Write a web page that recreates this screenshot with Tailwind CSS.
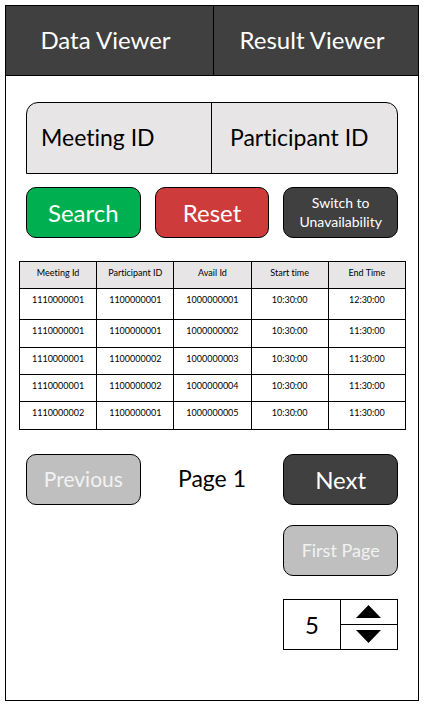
<!DOCTYPE html>
<html lang="en">
<head>
<meta charset="utf-8">
<meta name="viewport" content="width=device-width, initial-scale=1">
<title>Data Viewer</title>
<script src="https://cdn.jsdelivr.net/npm/@tailwindcss/browser@4"></script>
</head>
<body class="bg-white font-['Lato','Open_Sans',sans-serif] text-black [font-variant-ligatures:none]">
<div class="flex min-h-screen px-[5px] pt-[5px] pb-2">
  <div class="flex w-full flex-col border border-black">
    <nav class="grid h-[70px] grid-cols-[104fr_102fr] border-b border-black bg-[#404040] text-2xl text-white">
      <a href="#data" class="flex items-center justify-center border-r border-black pr-2 pb-0.5">Data Viewer</a>
      <a href="#result" class="flex items-center justify-center pr-2 pb-0.5">Result Viewer</a>
    </nav>
    <main class="flex flex-col pt-[26px]">
      <form class="px-5">
        <div class="grid h-[72px] grid-cols-2 overflow-hidden rounded-t-xl border border-black bg-[#e7e5e6] text-[23px]">
          <input type="text" aria-label="Meeting ID" placeholder="Meeting ID" class="min-w-0 border-r border-black pb-0.5 pl-3.5 placeholder:text-black">
          <input type="text" aria-label="Participant ID" placeholder="Participant ID" class="min-w-0 pb-0.5 pl-[18px] placeholder:text-black">
        </div>
        <div class="mt-[13px] grid h-[51px] grid-cols-3 gap-3.5 text-white">
          <button type="button" class="rounded-[10px] border border-black bg-[#00b050] text-2xl">Search</button>
          <button type="reset" class="rounded-[10px] border border-black bg-[#cd3b3b] text-2xl">Reset</button>
          <button type="button" class="rounded-[10px] border border-black bg-[#404040] pb-0.5 text-sm leading-[19px]">Switch to Unavailability</button>
        </div>
      </form>
      <div class="mt-[23px] px-[13px] pr-3">
        <table class="w-full table-fixed border-collapse text-center text-[9px] leading-[10px] [&_td]:border [&_td]:border-black [&_td]:pt-1.5 [&_td]:align-top [&_th]:border [&_th]:border-black [&_th]:pt-1.5 [&_th]:align-top [&_th]:font-normal">
          <thead>
            <tr class="h-[27px] bg-[#e7e5e6]"><th>Meeting Id</th><th>Participant ID</th><th>Avail Id</th><th>Start time</th><th>End Time</th></tr>
          </thead>
          <tbody>
            <tr class="h-[31px]"><td>1110000001</td><td>1100000001</td><td>1000000001</td><td>10:30:00</td><td>12:30:00</td></tr>
            <tr class="h-7"><td>1110000001</td><td>1100000001</td><td>1000000002</td><td>10:30:00</td><td>11:30:00</td></tr>
            <tr class="h-[27px]"><td>1110000001</td><td>1100000002</td><td>1000000003</td><td>10:30:00</td><td>11:30:00</td></tr>
            <tr class="h-[27px]"><td>1110000001</td><td>1100000002</td><td>1000000004</td><td>10:30:00</td><td>11:30:00</td></tr>
            <tr class="h-7"><td>1110000002</td><td>1100000001</td><td>1000000005</td><td>10:30:00</td><td>11:30:00</td></tr>
          </tbody>
        </table>
      </div>
      <div class="mt-6 grid grid-cols-3 gap-x-3.5 gap-y-5 px-5">
        <button type="button" disabled class="h-[51px] rounded-[10px] border border-black bg-[#bfbfbf] pb-0.5 text-[21px] text-[#f2f2f2]">Previous</button>
        <p class="flex items-center justify-center pb-0.5 text-[23px]">Page 1</p>
        <button type="button" class="h-[51px] rounded-[10px] border border-black bg-[#404040] text-2xl text-white">Next</button>
        <button type="button" disabled class="col-start-3 h-[51px] rounded-[10px] border border-black bg-[#bfbfbf] pb-0.5 text-lg text-[#f2f2f2]">First Page</button>
        <div class="col-start-3 mt-[3px] grid h-[51px] grid-cols-2 border border-black">
          <input type="text" inputmode="numeric" aria-label="Rows per page" value="5" class="min-w-0 border-r border-black text-center text-2xl">
          <div class="grid grid-rows-2">
            <button type="button" aria-label="Increase" class="flex items-center justify-center border-b border-black"><svg class="h-[13px] w-[25px]" viewBox="0 0 25 13"><path d="M12.5 0 25 13H0Z"/></svg></button>
            <button type="button" aria-label="Decrease" class="flex items-center justify-center"><svg class="h-[13px] w-[25px]" viewBox="0 0 25 13"><path d="M0 0H25L12.5 13Z"/></svg></button>
          </div>
        </div>
      </div>
    </main>
  </div>
</div>
</body>
</html>
